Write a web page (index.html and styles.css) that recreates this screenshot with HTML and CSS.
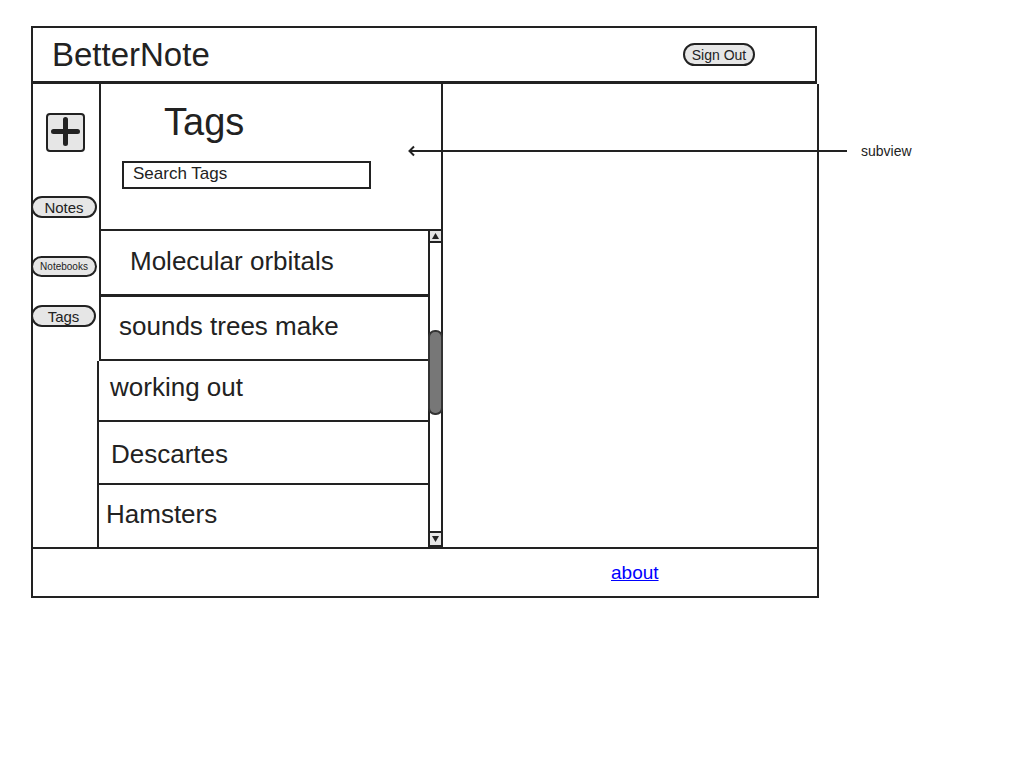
FILE: index.html
```html
<!DOCTYPE html>
<html lang="en">
<head>
<meta charset="utf-8">
<title>BetterNote</title>
<link rel="stylesheet" href="styles.css">
</head>
<body>
<div class="page">
  <header class="topbar">
    <h1 class="brand">BetterNote</h1>
    <button class="pill pill-signout">Sign Out</button>
  </header>

  <main class="workspace">
    <nav class="sidebar">
      <button class="add-btn" aria-label="Add">
        <svg width="29" height="29" viewBox="0 0 29 29"><path d="M14.5 2.5V26.5M2.5 14.5H26.5" stroke="#222" stroke-width="5" stroke-linecap="round" fill="none"/></svg>
      </button>
      <button class="pill nav-notes">Notes</button>
      <button class="pill nav-notebooks">Notebooks</button>
      <button class="pill nav-tags">Tags</button>
    </nav>

    <section class="tags-panel">
      <div class="tags-head">
        <h2 class="tags-title">Tags</h2>
        <div class="search">Search Tags</div>
      </div>
      <div class="tags-body">
        <ul class="tags-list">
          <li class="tag tag-1">Molecular orbitals</li>
          <li class="tag tag-2">sounds trees make</li>
          <li class="tag tag-3">working out</li>
          <li class="tag tag-4">Descartes</li>
          <li class="tag tag-5">Hamsters</li>
        </ul>
        <div class="scrollbar">
          <div class="scroll-btn scroll-up">
            <svg width="7" height="6" viewBox="0 0 7 6"><polygon points="0,6 7,6 3.5,0" fill="#222"/></svg>
          </div>
          <div class="scroll-thumb"></div>
          <div class="scroll-space"></div>
          <div class="scroll-btn scroll-down">
            <svg width="7" height="6" viewBox="0 0 7 6"><polygon points="0,0 7,0 3.5,6" fill="#222"/></svg>
          </div>
        </div>
      </div>
    </section>

    <section class="subview"></section>

    <div class="annotation">
      <svg class="annotation-arrow" width="439" height="12" viewBox="0 0 439 12"><path d="M6 1.5L1.5 6L6 10.5M1.5 6H439" stroke="#222" stroke-width="2" fill="none"/></svg>
      <span class="annotation-label">subview</span>
    </div>
  </main>

  <footer class="footer">
    <a class="footer-link" href="#">about</a>
  </footer>
</div>
</body>
</html>
```

FILE: styles.css
```css
* {
  box-sizing: border-box;
}

body {
  margin: 0;
  background: #fff;
  color: #222;
  font-family: "Liberation Sans", Arial, Helvetica, sans-serif;
}

.page {
  width: 788px;
  margin: 26px 0 0 31px;
}

/* Header */
.topbar {
  width: 786px;
  height: 58px;
  border: 2px solid #222;
  border-bottom-width: 3px;
  display: flex;
  align-items: center;
  padding-left: 19px;
}

.brand {
  margin: 0;
  font-size: 33px;
  font-weight: normal;
  line-height: 1;
}

.pill {
  appearance: none;
  border: 2px solid #222;
  border-radius: 12px;
  background: #e6e6e6;
  color: #222;
  font-family: inherit;
  padding: 0;
  display: flex;
  align-items: center;
  justify-content: center;
  line-height: 1;
}

.pill-signout {
  margin-left: auto;
  margin-right: 60px;
  width: 72px;
  height: 23px;
  font-size: 14px;
}

/* Workspace */
.workspace {
  position: relative;
  display: flex;
  height: 463px;
  border-left: 2px solid #222;
  border-right: 2px solid #222;
}

.sidebar {
  width: 68px;
  flex: none;
  border-right: 2px solid #222;
  display: flex;
  flex-direction: column;
  align-items: flex-start;
}

.add-btn {
  margin: 29px 0 0 13px;
  width: 39px;
  height: 39px;
  border: 2px solid #222;
  border-radius: 4px;
  background: #e6e6e6;
  padding: 0;
  display: flex;
  align-items: center;
  justify-content: center;
}

.add-btn svg {
  margin-top: -2px;
}

.nav-notes {
  margin: 44px 0 0 -2px;
  width: 66px;
  height: 22px;
  font-size: 15px;
}

.nav-notebooks {
  margin: 38px 0 0 -2px;
  width: 66px;
  height: 21px;
  font-size: 10px;
}

.nav-tags {
  margin: 28px 0 0 -2px;
  width: 65px;
  height: 22px;
  font-size: 15px;
}

/* Tags panel */
.tags-panel {
  width: 342px;
  flex: none;
  border-right: 2px solid #222;
  display: flex;
  flex-direction: column;
}

.tags-head {
  height: 145px;
  flex: none;
  padding-top: 18px;
}

.tags-title {
  margin: 0 0 0 63px;
  font-size: 38px;
  font-weight: normal;
  line-height: 41px;
}

.search {
  margin: 18px 0 0 21px;
  width: 249px;
  height: 28px;
  border: 2px solid #222;
  padding: 0 0 2px 9px;
  font-size: 17px;
  display: flex;
  align-items: center;
}

.tags-body {
  flex: 1;
  min-height: 0;
  display: flex;
}

.tags-list {
  flex: 1;
  margin: 0;
  padding: 0;
  list-style: none;
  display: flex;
  flex-direction: column;
}

.tag {
  flex: none;
  background: #fff;
  border-left: 2px solid #222;
  border-bottom: 2px solid #222;
  display: flex;
  align-items: center;
  font-size: 26px;
  white-space: nowrap;
}

.tag-1 {
  height: 68px;
  border-top: 2px solid #222;
  border-bottom-width: 3px;
  margin-left: -2px;
  padding: 0 0 2px 29px;
}

.tag-2 {
  height: 64px;
  margin-left: -2px;
  padding: 0 0 4px 18px;
}

.tag-3 {
  height: 61px;
  margin-left: -4px;
  padding: 0 0 7px 11px;
}

.tag-4 {
  height: 63px;
  margin-left: -4px;
  padding: 3px 0 0 12px;
}

.tag-5 {
  height: 62px;
  border-bottom: none;
  margin-left: -4px;
  padding: 0 0 4px 7px;
}

/* Scrollbar */
.scrollbar {
  width: 13px;
  flex: none;
  border-left: 2px solid #222;
  border-top: 2px solid #222;
  display: flex;
  flex-direction: column;
}

.scroll-btn {
  flex: none;
  background: #e6e6e6;
  display: flex;
  align-items: center;
  justify-content: center;
}

.scroll-up {
  height: 12px;
  border-bottom: 2px solid #222;
}

.scroll-down {
  height: 16px;
  border-top: 2px solid #222;
  border-bottom: 2px solid #222;
}

.scroll-thumb {
  flex: none;
  margin: 87px -2px 0 -2px;
  height: 85px;
  background: #777;
  border: 2px solid #333;
  border-radius: 7px;
}

.scroll-space {
  flex: 1;
}

.subview {
  flex: 1;
}

/* Annotation */
.annotation {
  position: absolute;
  left: 375px;
  top: 59px;
  height: 16px;
  display: flex;
  align-items: center;
}

.annotation-arrow {
  display: block;
}

.annotation-label {
  margin-left: 14px;
  font-size: 14px;
  line-height: 16px;
}

/* Footer */
.footer {
  height: 51px;
  border: 2px solid #222;
  display: flex;
  align-items: center;
  padding-left: 578px;
}

.footer-link {
  font-size: 19px;
  color: #0000ff;
  text-decoration: underline;
}
```
